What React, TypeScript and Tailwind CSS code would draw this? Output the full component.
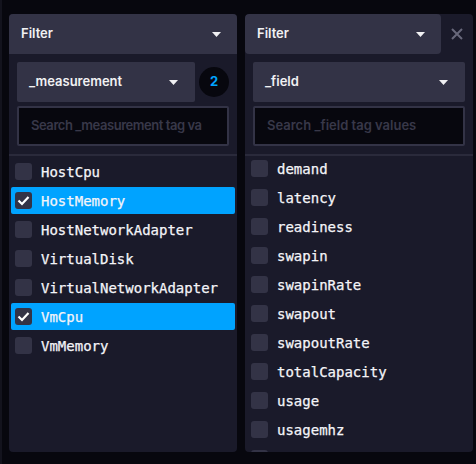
import React from "react";

const Caret = () => (
  <svg width="9" height="5" viewBox="0 0 9 5" className="shrink-0">
    <polygon points="0,0 9,0 4.5,5" fill="#f1f1f3" />
  </svg>
);

const Check = () => (
  <svg width="17" height="17" viewBox="0 0 17 17">
    <polyline points="3.5,8.5 7,12 13.5,5" fill="none" stroke="#ffffff" strokeWidth="2.2" />
  </svg>
);

type Item = { label: string; checked?: boolean };

const Row = ({ item }: { item: Item }) => (
  <div
    className={`h-[27px] shrink-0 rounded-[2px] flex items-center pl-[4px] gap-[9px] ${
      item.checked ? "bg-[#00a3ff]" : ""
    }`}
  >
    <div className="w-[17px] h-[17px] rounded-[3px] bg-[#333346] flex items-center justify-center">
      {item.checked && <Check />}
    </div>
    <span
      className="text-[14px] text-[#f4f4f8] leading-none"
      style={{ fontFamily: '"DejaVu Sans Mono", monospace', WebkitTextStroke: "0.25px #f4f4f8" }}
    >
      {item.label}
    </span>
  </div>
);

const sans = { fontFamily: 'Inter, Roboto, "Noto Sans", sans-serif' };

export default function App() {
  const left: Item[] = [
    { label: "HostCpu" },
    { label: "HostMemory", checked: true },
    { label: "HostNetworkAdapter" },
    { label: "VirtualDisk" },
    { label: "VirtualNetworkAdapter" },
    { label: "VmCpu", checked: true },
    { label: "VmMemory" },
  ];
  const right: Item[] = [
    "demand",
    "latency",
    "readiness",
    "swapin",
    "swapinRate",
    "swapout",
    "swapoutRate",
    "totalCapacity",
    "usage",
    "usagemhz",
    "",
  ].map((l) => ({ label: l }));

  return (
    <div className="w-[476px] h-[464px] bg-[#07070e] flex overflow-hidden" style={sans}>
      <div className="w-[2px] h-full bg-[#13131d] shrink-0" />
      <div className="flex gap-[8px] pl-[7px] pt-[14px] pb-[12px]">
        {/* Left panel */}
        <div className="w-[228px] h-[438px] bg-[#1a1a2a] rounded-[4px] flex flex-col overflow-hidden">
          <div className="h-[40px] shrink-0 bg-[#333346] flex items-center justify-between pl-[12px] pr-[16px]">
            <span className="text-[13px] font-semibold text-[#f1f1f3]">Filter</span>
            <Caret />
          </div>
          <div className="p-[8px] flex flex-col gap-[4px]">
            <div className="flex gap-[4px] items-center">
              <div className="w-[178px] h-[40px] bg-[#333346] rounded-[2px] flex items-center justify-between pl-[12px] pr-[17px]">
                <span className="text-[13px] font-semibold text-[#f1f1f3]">_measurement</span>
                <Caret />
              </div>
              <div className="w-[30px] h-[30px] rounded-full bg-[#07070e] flex items-center justify-center">
                <span className="text-[13px] font-bold text-[#00a3ff]">2</span>
              </div>
            </div>
            <div className="h-[40px] bg-[#07070e] border-2 border-[#333346] rounded-[2px] flex items-center pl-[12px]">
              <span className="text-[13px] font-semibold text-[#383849] whitespace-nowrap tracking-[-0.45px]">
                Search _measurement tag va
              </span>
            </div>
          </div>
          <div className="h-[2px] bg-[#2a2a3b] shrink-0" />
          <div className="flex flex-col gap-[2px] px-[2px] pt-[2px]">
            {left.map((it) => (
              <Row key={it.label} item={it} />
            ))}
          </div>
        </div>

        {/* Right panel */}
        <div className="w-[228px] h-[438px] bg-[#1a1a2a] rounded-[4px] flex flex-col overflow-hidden">
          <div className="h-[40px] shrink-0 flex">
            <div className="w-[196px] h-full bg-[#333346] rounded-[4px] flex items-center justify-between pl-[12px] pr-[16px]">
              <span className="text-[13px] font-semibold text-[#f1f1f3]">Filter</span>
              <Caret />
            </div>
            <div className="flex-1 flex items-center justify-center">
              <svg width="12" height="12" viewBox="0 0 12 12">
                <path d="M1 1 L11 11 M11 1 L1 11" stroke="#68687b" strokeWidth="2" />
              </svg>
            </div>
          </div>
          <div className="p-[8px] flex flex-col gap-[4px]">
            <div className="h-[40px] bg-[#333346] rounded-[2px] flex items-center justify-between pl-[12px] pr-[17px]">
              <span className="text-[13px] font-semibold text-[#f1f1f3]">_field</span>
              <Caret />
            </div>
            <div className="h-[40px] bg-[#07070e] border-2 border-[#333346] rounded-[2px] flex items-center pl-[12px]">
              <span className="text-[13px] font-semibold text-[#383849] whitespace-nowrap">
                Search _field tag values
              </span>
            </div>
          </div>
          <div className="h-[2px] bg-[#2a2a3b] shrink-0" />
          <div className="flex-1 overflow-hidden pb-[1px]">
            <div className="flex flex-col gap-[2px] px-[2px] mt-[-1px]">
              {right.map((it, i) => (
                <Row key={i} item={it} />
              ))}
            </div>
          </div>
        </div>
      </div>
    </div>
  );
}
